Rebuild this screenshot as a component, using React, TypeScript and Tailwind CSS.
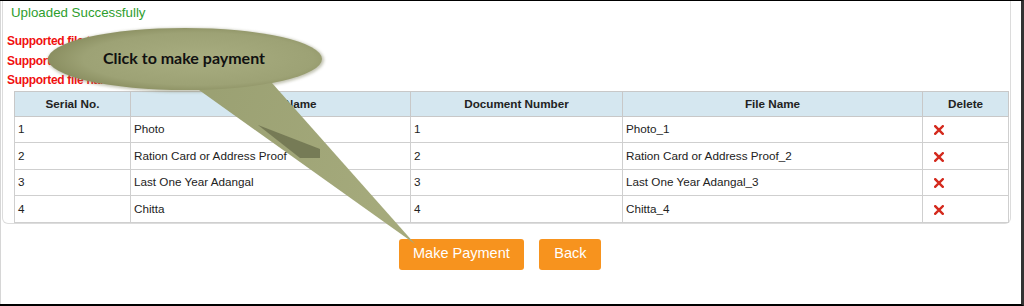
import React from "react";

const rows = [
  { serial: "1", name: "Photo", number: "1", file: "Photo_1" },
  { serial: "2", name: "Ration Card or Address Proof", number: "2", file: "Ration Card or Address Proof_2" },
  { serial: "3", name: "Last One Year Adangal", number: "3", file: "Last One Year Adangal_3" },
  { serial: "4", name: "Chitta", number: "4", file: "Chitta_4" },
];

function DeleteIcon() {
  return (
    <svg width="10" height="10" viewBox="0 0 10 10" className="inline-block">
      <path d="M1.2 1.2 L8.8 8.8 M8.8 1.2 L1.2 8.8" stroke="#d42a1e" strokeWidth="2.4" strokeLinecap="square" />
    </svg>
  );
}

function Callout() {
  return (
    <svg
      width="1024"
      height="306"
      viewBox="0 0 1024 306"
      className="absolute left-0 top-0 pointer-events-none"
    >
      <defs>
        <radialGradient id="bubble" cx="0.55" cy="0.5" r="0.6">
          <stop offset="0" stopColor="#a8ad80" />
          <stop offset="0.7" stopColor="#9da275" />
          <stop offset="1" stopColor="#838759" />
        </radialGradient>
        <linearGradient id="tail" x1="0" y1="0" x2="1" y2="0.3">
          <stop offset="0" stopColor="#9aa072" />
          <stop offset="1" stopColor="#a5aa7c" />
        </linearGradient>
        <filter id="soft" x="-10%" y="-20%" width="120%" height="140%">
          <feGaussianBlur stdDeviation="1.5" />
        </filter>
      </defs>
      <ellipse cx="186" cy="59" rx="138" ry="32" fill="#7a7d58" opacity="0.45" filter="url(#soft)" />
      <polygon points="192,84 272,82 415,243" fill="url(#tail)" />
      <polygon points="258,124 320,148 320,157 300,157" fill="#6f7350" opacity="0.85" />
      <ellipse cx="185" cy="58" rx="137" ry="31" fill="url(#bubble)" />
      <text
        x="184"
        y="63"
        textAnchor="middle"
        fontFamily="Lato, 'Open Sans', sans-serif"
        fontWeight="700"
        fontSize="16"
        fill="#111"
      >
        Click to make payment
      </text>
    </svg>
  );
}

export default function App() {
  return (
    <div className="relative w-[1024px] h-[306px] bg-white border-t border-t-black border-r-[3px] border-r-[#333] border-b-2 border-b-black font-['Liberation_Sans',Arial,sans-serif]">
      <div className="h-full border-l border-l-[#d6d6d6] pl-[1px]">
        <div className="w-[1009px] border border-t-0 border-[#dcdcdc] rounded-b-[6px] pl-[4px]">
          <div className="pt-[4px] pl-[4px] text-[13.3px] leading-[16px] text-[#2e9e2e]">
            Uploaded Successfully
          </div>
          <div className="mt-[11px] text-[12px] leading-[19.5px] font-bold text-[#f01010] tracking-[-0.3px]">
            <div>Supported file types : jpg, jpeg, png</div>
            <div>Supported file size : 2 MB</div>
            <div>Supported file name length : 50</div>
          </div>
          <table className="mt-[0px] ml-[7px] w-[994px] border-collapse text-[11.7px] text-[#222] table-fixed">
            <colgroup>
              <col className="w-[116px]" />
              <col className="w-[280px]" />
              <col className="w-[212px]" />
              <col className="w-[300px]" />
              <col className="w-[86px]" />
            </colgroup>
            <thead>
              <tr className="h-[25px] bg-[#d5e7f0]">
                <th className="border border-[#c8c8c8] font-bold text-center">Serial No.</th>
                <th className="border border-[#c8c8c8] font-bold text-center">Document Name</th>
                <th className="border border-[#c8c8c8] font-bold text-center">Document Number</th>
                <th className="border border-[#c8c8c8] font-bold text-center">File Name</th>
                <th className="border border-[#c8c8c8] font-bold text-center">Delete</th>
              </tr>
            </thead>
            <tbody>
              {rows.map((r) => (
                <tr key={r.serial} className="h-[26.5px]">
                  <td className="border border-[#cfcfcf] px-[3px]">{r.serial}</td>
                  <td className="border border-[#cfcfcf] px-[3px]">{r.name}</td>
                  <td className="border border-[#cfcfcf] px-[3px]">{r.number}</td>
                  <td className="border border-[#cfcfcf] px-[3px]">{r.file}</td>
                  <td className="border border-[#cfcfcf] pl-[11px]">
                    <DeleteIcon />
                  </td>
                </tr>
              ))}
            </tbody>
          </table>
        </div>
        <div className="mt-[15px] flex justify-center gap-[15px] pr-[23px]">
          <button className="h-[31px] px-[14.5px] rounded-[3px] bg-[#f7931e] text-white text-[14.5px]">
            Make Payment
          </button>
          <button className="h-[31px] px-[15px] rounded-[3px] bg-[#f7931e] text-white text-[14.5px]">
            Back
          </button>
        </div>
      </div>
      <Callout />
    </div>
  );
}
